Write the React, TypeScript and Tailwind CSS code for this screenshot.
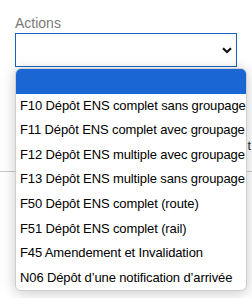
import React from 'react'

const options = [
  '',
  'F10 Dépôt ENS complet sans groupage',
  'F11 Dépôt ENS complet avec groupage',
  'F12 Dépôt ENS multiple avec groupage',
  'F13 Dépôt ENS multiple sans groupage',
  'F50 Dépôt ENS complet (route)',
  'F51 Dépôt ENS complet (rail)',
  'F45 Amendement et Invalidation',
  'N06 Dépôt d’une notification d’arrivée',
]

export default function App() {
  return (
    <div
      className="relative w-[252px] h-[298px] overflow-hidden bg-white text-black"
      style={{ fontFamily: '"Liberation Sans", Arial, sans-serif' }}
    >
      {/* page behind the open list */}
      <div className="pt-[15px] px-[15px]">
        <label className="block text-[14px] leading-[17px] text-[#7a7a7a]">Actions</label>
        <div className="mt-[1px] h-[34px] border border-[#1565c0] bg-white flex items-center justify-end pr-[4px]">
          <svg width="10" height="7" viewBox="0 0 10 7">
            <path d="M1 1.2 L5 5 L9 1.2" fill="none" stroke="#111" strokeWidth="2.2" />
          </svg>
        </div>
      </div>
      <div className="mt-[66px] h-[25px] flex justify-end pr-[1px] text-[13px] leading-[25px] text-[#333]">
        <span>t</span>
      </div>
      <div className="h-[14px] border-b border-[#c8c8c8]" />

      {/* open option list */}
      <ul className="absolute left-[15px] top-[68px] w-[232px] rounded-[6px] bg-white border border-[#cfcfcf] shadow-[0_2px_14px_rgba(0,0,0,0.22)] overflow-hidden">
        {options.map((o, i) => (
          <li
            key={i}
            className={`h-[24.6px] pl-[4px] text-[13px] tracking-[-0.12px] leading-[24.6px] whitespace-nowrap ${
              i === 0 ? 'bg-[#1a66d2] text-white' : ''
            }`}
          >
            {o}
          </li>
        ))}
      </ul>
    </div>
  )
}
